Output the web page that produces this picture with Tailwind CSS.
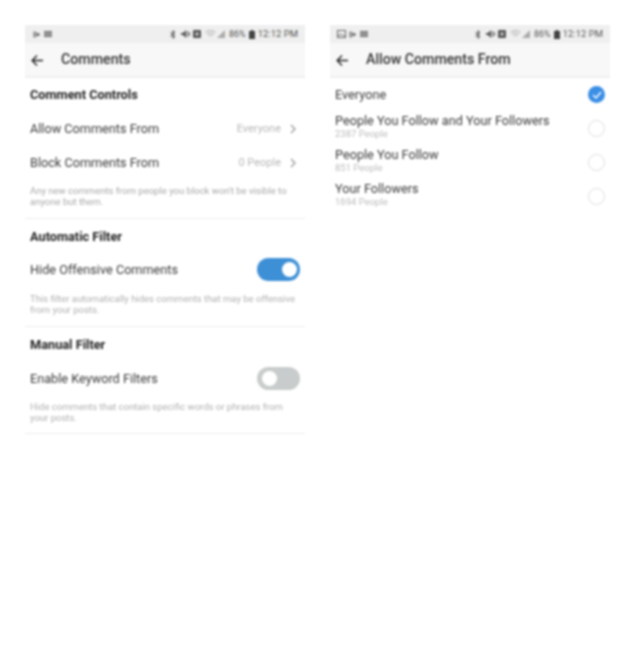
<!doctype html>
<html>
<head>
<meta charset="utf-8">
<script src="https://cdn.jsdelivr.net/npm/@tailwindcss/browser@4"></script>
</head>
<body class="bg-white">
<div class="flex gap-[25px] pt-[25px] pl-[25px] h-[652px] w-[635px] overflow-hidden font-['Roboto','Liberation_Sans',sans-serif] blur-[0.9px]">

  <!-- Left phone -->
  <section class="w-[280px] shrink-0">
    <div class="h-[18px] bg-[#efefef] flex items-center justify-between pl-[8px] pr-[7px] text-[#555]">
      <div class="flex items-center gap-[3px]">
        <svg width="8" height="7" viewBox="0 0 8 7" fill="none" stroke="#666" stroke-width="1"><path d="M1 .8v5.400L7 3.500z"/><path d="M1 3.500h5"/></svg>
        <svg width="8" height="6" viewBox="0 0 8 6" fill="#666"><path d="M0 0h8v1.500H0zM0 2.300h8v1.500H0zM0 4.500h8V6H0z"/></svg>
      </div>
      <div class="flex items-center text-[9px] leading-none">
        <svg class="mr-[5px]" width="6" height="9" viewBox="0 0 6 9" fill="none" stroke="#444" stroke-width="1"><path d="M.5 2.500 5 6.500 3 8.300V.7L5 2.500.5 6.500"/></svg>
        <svg class="mr-[3px]" width="9" height="8" viewBox="0 0 9 8" fill="#555"><path d="M0 3h2l3-3v8L2 5H0zM6 1h1v6H6zM8 2h1v4H8z"/></svg>
        <svg class="mr-[4px]" width="8" height="8" viewBox="0 0 8 8"><rect width="8" height="8" rx="1" fill="#555"/><rect x="2.500" y="2.500" width="3" height="3" fill="#ccc"/></svg>
        <svg class="mr-[1px]" width="11" height="8" viewBox="0 0 11 8" fill="none" stroke="#aaa" stroke-width="1"><path d="M.5 2.500C3.500-.2 7.500-.2 10.500 2.500M2 4.300c2-1.700 5-1.700 7 0M3.700 6c1-.8 2.600-.8 3.600 0"/></svg>
        <svg class="mr-[4px]" width="8" height="8" viewBox="0 0 8 8" fill="#aaa"><path d="M8 0v8H0z"/></svg>
        <span class="mr-[3px]">86%</span>
        <svg class="mr-[3px]" width="6" height="9" viewBox="0 0 6 9" fill="#444"><path d="M2 0h2v1h2v8H0V1h2z"/></svg>
        <span class="text-[9.5px]">12:12 PM</span>
      </div>
    </div>
    <header class="h-[33px] bg-[#f8f8f8] border-b-2 border-[#efefef] box-content flex items-center pl-[6px]">
      <svg width="12" height="12" viewBox="0 0 12 12" fill="none" stroke="#222" stroke-width="1.400"><path d="M12 6.500H1.200M6 1.500 1.200 6.500 6 11.500"/></svg>
      <h1 class="ml-[18px] text-[14.2px] font-medium text-[#333]">Comments</h1>
    </header>

    <div class="px-[5px] text-[12.7px]">
      <h2 class="h-[34px] flex items-center font-bold text-[#222] text-[12.75px]">Comment Controls</h2>
      <div class="h-[34px] flex items-center justify-between text-[#3a3a3a]">
        <span>Allow Comments From</span>
        <span class="flex items-center gap-[9px] text-[11px] text-[#b8b8b8] pr-[4px]">Everyone
          <svg width="6" height="10" viewBox="0 0 6 10" fill="none" stroke="#999" stroke-width="1.300"><path d="m1 1 4 4-4 4"/></svg>
        </span>
      </div>
      <div class="h-[34px] flex items-center justify-between text-[#3a3a3a]">
        <span>Block Comments From</span>
        <span class="flex items-center gap-[9px] text-[11px] text-[#b8b8b8] pr-[4px]">0 People
          <svg width="6" height="10" viewBox="0 0 6 10" fill="none" stroke="#999" stroke-width="1.300"><path d="m1 1 4 4-4 4"/></svg>
        </span>
      </div>
      <p class="pt-[5px] pb-[11px] text-[9.5px] leading-[11px] text-[#a8a8a8]">Any new comments from people you block won't be visible to anyone but them.</p>
    </div>
    <div class="h-px bg-[#ececec]"></div>

    <div class="px-[5px] text-[12.7px]">
      <h2 class="h-[35px] flex items-center font-bold text-[#222] text-[12.75px]">Automatic Filter</h2>
      <div class="h-[32px] flex items-center justify-between text-[#3a3a3a]">
        <span>Hide Offensive Comments</span>
        <span class="w-[43px] h-[23px] mb-[2px] rounded-full bg-[#3d8fd6] flex items-center justify-end pr-[3px]"><span class="w-[15px] h-[15px] rounded-full bg-white"></span></span>
      </div>
      <p class="pt-[7px] pb-[11px] text-[9.5px] leading-[11px] text-[#b0b0b0]">This filter automatically hides comments that may be offensive from your posts.</p>
    </div>
    <div class="h-px bg-[#ececec]"></div>

    <div class="px-[5px] text-[12.7px]">
      <h2 class="h-[35px] flex items-center font-bold text-[#222] text-[12.75px]">Manual Filter</h2>
      <div class="h-[34px] flex items-center justify-between text-[#3a3a3a]">
        <span>Enable Keyword Filters</span>
        <span class="w-[43px] h-[23px] mb-[2px] rounded-full bg-[#c9cccc] flex items-center pl-[5px]"><span class="w-[15px] h-[15px] rounded-full bg-white"></span></span>
      </div>
      <p class="pt-[5px] pb-[10px] text-[9.5px] leading-[11px] text-[#b0b0b0]">Hide comments that contain specific words or phrases from your posts.</p>
    </div>
    <div class="h-px bg-[#ececec]"></div>
  </section>

  <!-- Right phone -->
  <section class="w-[280px] shrink-0">
    <div class="h-[18px] bg-[#efefef] flex items-center justify-between pl-[7px] pr-[7px] text-[#555]">
      <div class="flex items-center gap-[3px]">
        <svg width="9" height="8" viewBox="0 0 9 8" fill="none" stroke="#666" stroke-width="1"><rect x=".5" y=".5" width="8" height="7"/><path d="M1 6.500 3 4l1.500 1.500L5.500 4.500 8 6.500"/></svg>
        <svg width="8" height="7" viewBox="0 0 8 7" fill="none" stroke="#666" stroke-width="1"><path d="M1 .8v5.400L7 3.500z"/><path d="M1 3.500h5"/></svg>
        <svg width="8" height="6" viewBox="0 0 8 6" fill="#666"><path d="M0 0h8v1.500H0zM0 2.300h8v1.500H0zM0 4.500h8V6H0z"/></svg>
      </div>
      <div class="flex items-center text-[9px] leading-none">
        <svg class="mr-[5px]" width="6" height="9" viewBox="0 0 6 9" fill="none" stroke="#444" stroke-width="1"><path d="M.5 2.500 5 6.500 3 8.300V.7L5 2.500.5 6.500"/></svg>
        <svg class="mr-[3px]" width="9" height="8" viewBox="0 0 9 8" fill="#555"><path d="M0 3h2l3-3v8L2 5H0zM6 1h1v6H6zM8 2h1v4H8z"/></svg>
        <svg class="mr-[4px]" width="8" height="8" viewBox="0 0 8 8"><rect width="8" height="8" rx="1" fill="#555"/><rect x="2.500" y="2.500" width="3" height="3" fill="#ccc"/></svg>
        <svg class="mr-[1px]" width="11" height="8" viewBox="0 0 11 8" fill="none" stroke="#aaa" stroke-width="1"><path d="M.5 2.500C3.500-.2 7.500-.2 10.500 2.500M2 4.300c2-1.700 5-1.700 7 0M3.700 6c1-.8 2.600-.8 3.600 0"/></svg>
        <svg class="mr-[4px]" width="8" height="8" viewBox="0 0 8 8" fill="#aaa"><path d="M8 0v8H0z"/></svg>
        <span class="mr-[3px]">86%</span>
        <svg class="mr-[3px]" width="6" height="9" viewBox="0 0 6 9" fill="#444"><path d="M2 0h2v1h2v8H0V1h2z"/></svg>
        <span class="text-[9.5px]">12:12 PM</span>
      </div>
    </div>
    <header class="h-[33px] bg-[#f8f8f8] border-b-2 border-[#efefef] box-content flex items-center pl-[6px]">
      <svg width="12" height="12" viewBox="0 0 12 12" fill="none" stroke="#222" stroke-width="1.400"><path d="M12 6.500H1.200M6 1.500 1.200 6.500 6 11.500"/></svg>
      <h1 class="ml-[18px] text-[14.2px] font-medium text-[#333]">Allow Comments From</h1>
    </header>

    <div class="pl-[5px] pr-[5px] text-[12.7px] text-[#3a3a3a]">
      <div class="h-[33px] flex items-center justify-between">
        <span>Everyone</span>
        <span class="w-[17px] h-[17px] rounded-full bg-[#3a8ee6] flex items-center justify-center">
          <svg width="10" height="8" viewBox="0 0 10 8" fill="none" stroke="#fff" stroke-width="1.400"><path d="m1 4 3 3 5-6"/></svg>
        </span>
      </div>
      <div class="h-[34px] flex items-center justify-between">
        <div class="pb-[4px]"><div class="leading-[15px]">People You Follow and Your Followers</div><div class="text-[9.5px] leading-[11px] text-[#bcbcbc]">2387 People</div></div>
        <span class="w-[17px] h-[17px] rounded-full border border-[#dcdcdc]"></span>
      </div>
      <div class="h-[34px] flex items-center justify-between">
        <div class="pb-[4px]"><div class="leading-[15px]">People You Follow</div><div class="text-[9.5px] leading-[11px] text-[#bcbcbc]">851 People</div></div>
        <span class="w-[17px] h-[17px] rounded-full border border-[#dcdcdc]"></span>
      </div>
      <div class="h-[34px] flex items-center justify-between">
        <div class="pb-[4px]"><div class="leading-[15px]">Your Followers</div><div class="text-[9.5px] leading-[11px] text-[#bcbcbc]">1694 People</div></div>
        <span class="w-[17px] h-[17px] rounded-full border border-[#dcdcdc]"></span>
      </div>
    </div>
  </section>
</div>
</body>
</html>
